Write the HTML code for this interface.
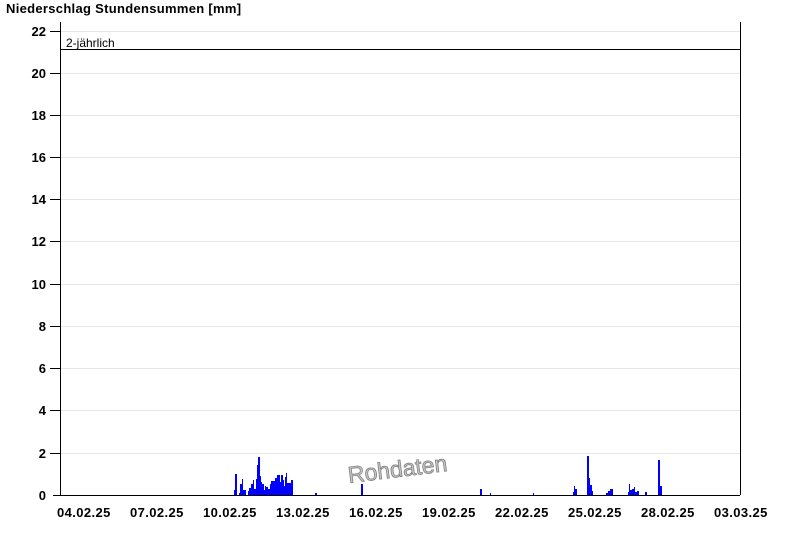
<!DOCTYPE html>
<html><head><meta charset="utf-8"><style>body{margin:0;background:#fff}svg{display:block}</style></head><body>
<svg width="800" height="550" xmlns="http://www.w3.org/2000/svg" font-family="Liberation Sans, sans-serif">
<rect width="800" height="550" fill="#fff"/>
<text x="6" y="13" font-size="13" font-weight="bold" letter-spacing="0.3">Niederschlag Stundensummen [mm]</text>
<g stroke="#e6e6e6" stroke-width="1">
<line x1="60" x2="740" y1="31.5" y2="31.5"/><line x1="60" x2="740" y1="73.5" y2="73.5"/><line x1="60" x2="740" y1="115.5" y2="115.5"/><line x1="60" x2="740" y1="157.5" y2="157.5"/><line x1="60" x2="740" y1="199.5" y2="199.5"/><line x1="60" x2="740" y1="241.5" y2="241.5"/><line x1="60" x2="740" y1="284.5" y2="284.5"/><line x1="60" x2="740" y1="326.5" y2="326.5"/><line x1="60" x2="740" y1="368.5" y2="368.5"/><line x1="60" x2="740" y1="410.5" y2="410.5"/><line x1="60" x2="740" y1="453.5" y2="453.5"/>
</g>
<g fill="#0000ff">
<rect x="234" y="490" width="1" height="5"/><rect x="235" y="474" width="2" height="21"/><rect x="239" y="493" width="1" height="2"/><rect x="240" y="484" width="2" height="11"/><rect x="242" y="479" width="1" height="16"/><rect x="243" y="490" width="3" height="5"/>
<rect x="248" y="491" width="1" height="4"/><rect x="249" y="488" width="2" height="7"/><rect x="251" y="484" width="2" height="11"/><rect x="253" y="480" width="1" height="15"/><rect x="254" y="489" width="2" height="6"/><rect x="256" y="479" width="1" height="16"/><rect x="257" y="465" width="1" height="30"/><rect x="258" y="457" width="2" height="38"/><rect x="260" y="476" width="1" height="19"/><rect x="261" y="482" width="1" height="13"/><rect x="262" y="484" width="2" height="11"/><rect x="264" y="490" width="1" height="5"/><rect x="265" y="486" width="1" height="9"/><rect x="266" y="487" width="2" height="8"/><rect x="268" y="489" width="2" height="6"/><rect x="270" y="484" width="1" height="11"/><rect x="271" y="481" width="4" height="14"/><rect x="275" y="478" width="2" height="17"/><rect x="277" y="475" width="3" height="20"/><rect x="280" y="482" width="1" height="13"/><rect x="281" y="475" width="2" height="20"/><rect x="283" y="480" width="1" height="15"/><rect x="284" y="486" width="1" height="9"/><rect x="285" y="477" width="1" height="18"/><rect x="286" y="473" width="1" height="22"/><rect x="287" y="483" width="4" height="12"/><rect x="291" y="480" width="2" height="15"/>
<rect x="315" y="493" width="2" height="2"/><rect x="361" y="484" width="2" height="11"/><rect x="480" y="489" width="2" height="6"/><rect x="490" y="493" width="1" height="2"/><rect x="533" y="493" width="1" height="2"/>
<rect x="573" y="492" width="1" height="3"/><rect x="574" y="486" width="1" height="9"/><rect x="575" y="489" width="2" height="6"/><rect x="587" y="456" width="2" height="39"/><rect x="589" y="478" width="1" height="17"/><rect x="590" y="485" width="2" height="10"/><rect x="592" y="491" width="1" height="4"/>
<rect x="606" y="493" width="2" height="2"/><rect x="608" y="491" width="2" height="4"/><rect x="610" y="489" width="3" height="6"/><rect x="628" y="492" width="1" height="3"/><rect x="629" y="484" width="1" height="11"/><rect x="630" y="490" width="2" height="5"/><rect x="632" y="489" width="2" height="6"/><rect x="634" y="487" width="1" height="8"/><rect x="635" y="492" width="2" height="3"/><rect x="637" y="491" width="2" height="4"/><rect x="645" y="492" width="2" height="3"/><rect x="658" y="460" width="2" height="35"/><rect x="660" y="486" width="2" height="9"/>
</g>
<g stroke="#000" stroke-width="1">
<line x1="60.5" y1="22" x2="60.5" y2="495"/><line x1="740.5" y1="22" x2="740.5" y2="495"/><line x1="53" y1="495.5" x2="740" y2="495.5"/>
<line x1="60" y1="49.5" x2="740" y2="49.5"/>
<line x1="50" x2="60" y1="31.5" y2="31.5"/><line x1="50" x2="60" y1="73.5" y2="73.5"/><line x1="50" x2="60" y1="115.5" y2="115.5"/><line x1="50" x2="60" y1="157.5" y2="157.5"/><line x1="50" x2="60" y1="199.5" y2="199.5"/><line x1="50" x2="60" y1="241.5" y2="241.5"/><line x1="50" x2="60" y1="284.5" y2="284.5"/><line x1="50" x2="60" y1="326.5" y2="326.5"/><line x1="50" x2="60" y1="368.5" y2="368.5"/><line x1="50" x2="60" y1="410.5" y2="410.5"/><line x1="50" x2="60" y1="453.5" y2="453.5"/>
</g>
<g stroke="#000" id="xt"></g>
<text x="66" y="47" font-size="12">2-jährlich</text>
<g font-size="13" font-weight="bold" text-anchor="end">
<text x="46" y="36">22</text><text x="46" y="78">20</text><text x="46" y="120">18</text><text x="46" y="162">16</text><text x="46" y="204">14</text><text x="46" y="246">12</text><text x="46" y="289">10</text><text x="46" y="331">8</text><text x="46" y="373">6</text><text x="46" y="415">4</text><text x="46" y="458">2</text><text x="46" y="500">0</text>
</g>
<g font-size="13" font-weight="bold" letter-spacing="0.4">
<text x="57" y="517">04.02.25</text><text x="130" y="517">07.02.25</text><text x="203" y="517">10.02.25</text><text x="276" y="517">13.02.25</text><text x="349" y="517">16.02.25</text><text x="422" y="517">19.02.25</text><text x="495" y="517">22.02.25</text><text x="568" y="517">25.02.25</text><text x="641" y="517">28.02.25</text><text x="714" y="517">03.03.25</text>
</g>
<text x="349" y="483" font-size="23" fill="#c8c8c8" stroke="#808080" stroke-width="0.8" transform="rotate(-7 349 483)">Rohdaten</text>
<script>
var g=document.getElementById('xt'),s='';
for(var i=0;i<=27;i++){var x=Math.round(60+i*24.33)+0.5;var l=(i%3==0)?8:5;s+='<line x1="'+x+'" x2="'+x+'" y1="495" y2="'+(495+l)+'"/>';}
g.innerHTML=s;
</script>
</svg>
</body></html>
